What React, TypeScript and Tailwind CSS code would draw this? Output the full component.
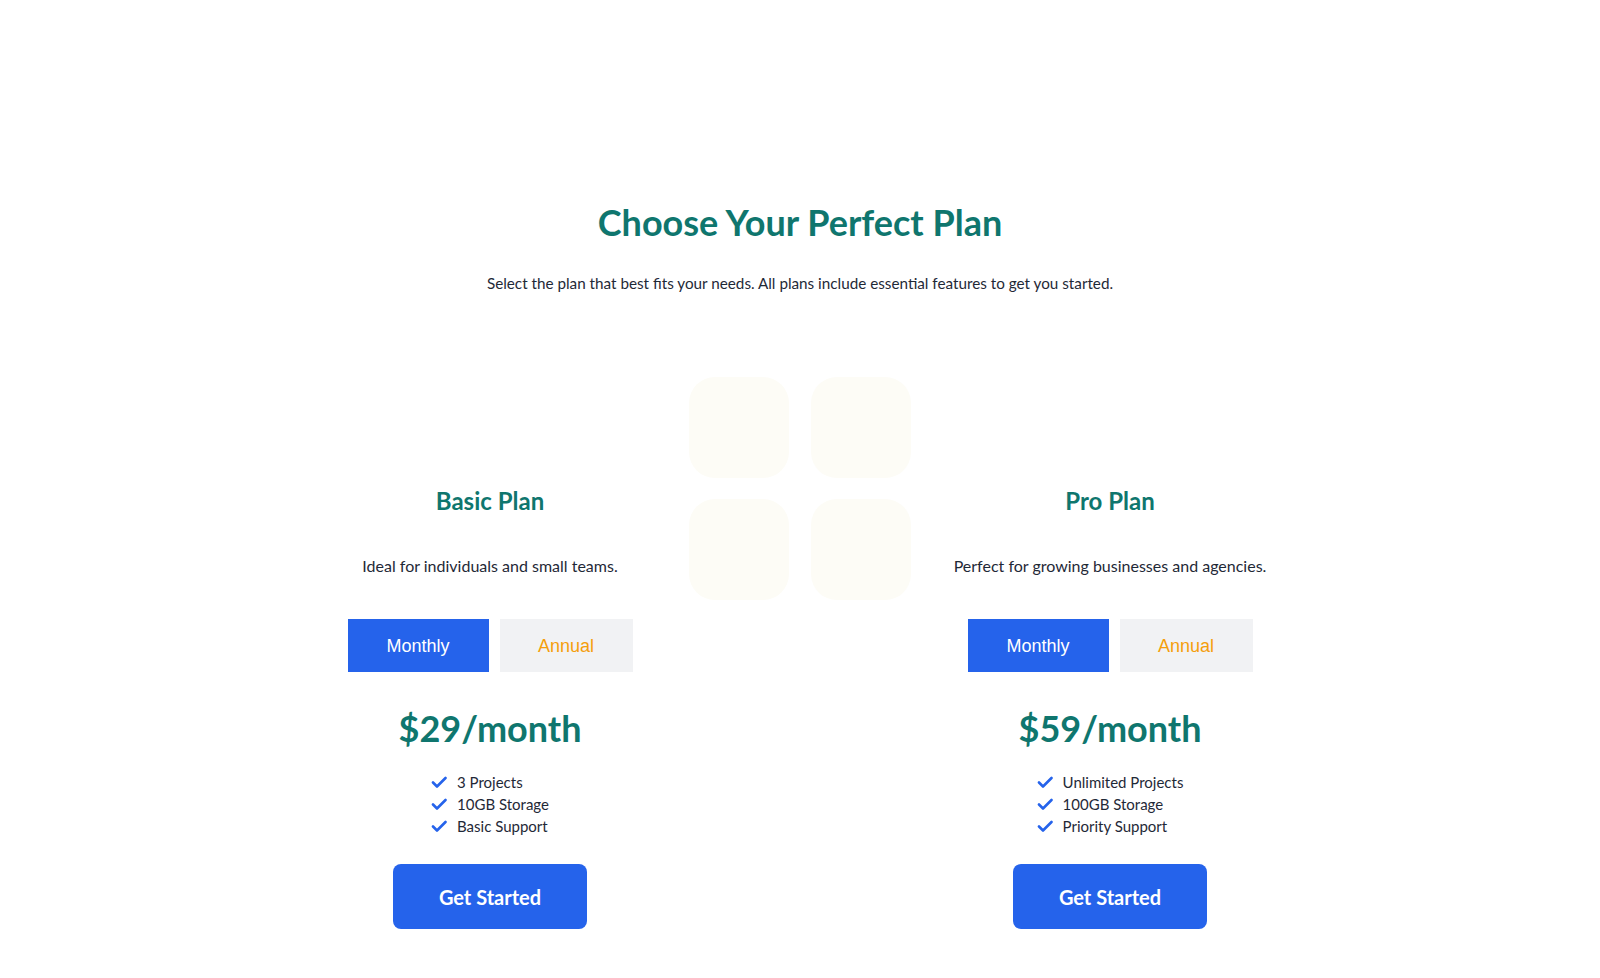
import { useState } from "react";

type Plan = {
  name: string;
  blurb: string;
  monthly: number;
  features: string[];
};

const PLANS: Plan[] = [
  {
    name: "Basic Plan",
    blurb: "Ideal for individuals and small teams.",
    monthly: 29,
    features: ["3 Projects", "10GB Storage", "Basic Support"],
  },
  {
    name: "Pro Plan",
    blurb: "Perfect for growing businesses and agencies.",
    monthly: 59,
    features: ["Unlimited Projects", "100GB Storage", "Priority Support"],
  },
];

function CheckIcon() {
  return (
    <svg width="16" height="14" viewBox="0 0 16 14" fill="none" className="shrink-0">
      <path d="M2 7.5l4 4L14.5 3" stroke="#2563eb" strokeWidth="2.6" strokeLinecap="round" strokeLinejoin="round" />
    </svg>
  );
}

function GridMark() {
  return (
    <svg width="224" height="224" viewBox="0 0 224 224" fill="#fdfcf6">
      <rect x="1" y="1" width="100" height="101" rx="26" />
      <rect x="123" y="1" width="100" height="101" rx="26" />
      <rect x="1" y="123" width="100" height="101" rx="26" />
      <rect x="123" y="123" width="100" height="101" rx="26" />
    </svg>
  );
}

function PlanCard({ plan }: { plan: Plan }) {
  const [cycle, setCycle] = useState<"monthly" | "annual">("monthly");
  return (
    <div className="flex flex-col items-center pt-[109px] text-center">
      <h2 className="text-2xl leading-8 font-bold text-[#0f766e]">{plan.name}</h2>
      <p className="mt-[37px] whitespace-nowrap text-base leading-6 text-[#1f2937]">{plan.blurb}</p>
      <div className="mt-[41px] flex gap-[11px] font-['Liberation_Sans',Arial,sans-serif] text-lg">
        <button
          onClick={() => setCycle("monthly")}
          className={`h-[53px] w-[141px] ${cycle === "monthly" ? "bg-[#2563eb] text-white" : "bg-[#f1f2f4] text-[#f59e0b]"}`}
        >
          Monthly
        </button>
        <button
          onClick={() => setCycle("annual")}
          className={`h-[53px] w-[133px] ${cycle === "annual" ? "bg-[#2563eb] text-white" : "bg-[#f1f2f4] text-[#f59e0b]"}`}
        >
          Annual
        </button>
      </div>
      <div className="mt-9 text-4xl leading-10 font-bold text-[#0f766e]">
        {cycle === "monthly" ? `$${plan.monthly}/month` : `$${plan.monthly * 10}/year`}
      </div>
      <ul className="mt-[23px] flex flex-col items-start text-[15px] leading-[22px] text-[#1f2937]">
        {plan.features.map((f) => (
          <li key={f} className="flex items-center gap-[10px]">
            <CheckIcon />
            {f}
          </li>
        ))}
      </ul>
      <button className="mt-[27px] h-[65px] w-[194px] rounded-lg bg-[#2563eb] text-xl font-bold text-white">
        Get Started
      </button>
    </div>
  );
}

export default function App() {
  return (
    <main className="min-h-screen bg-white pt-[202px] pb-12 font-['Lato',sans-serif]">
      <header className="text-center">
        <h1 className="text-4xl leading-10 font-bold text-[#0f766e]">Choose Your Perfect Plan</h1>
        <p className="mt-[29px] text-[15.25px] leading-6 text-[#1f2937]">
          Select the plan that best fits your needs. All plans include essential features to get you started.
        </p>
      </header>
      <section className="mx-auto mt-[81px] grid w-[930px] grid-cols-3">
        <PlanCard plan={PLANS[0]} />
        <div className="flex justify-center">
          <GridMark />
        </div>
        <PlanCard plan={PLANS[1]} />
      </section>
    </main>
  );
}
